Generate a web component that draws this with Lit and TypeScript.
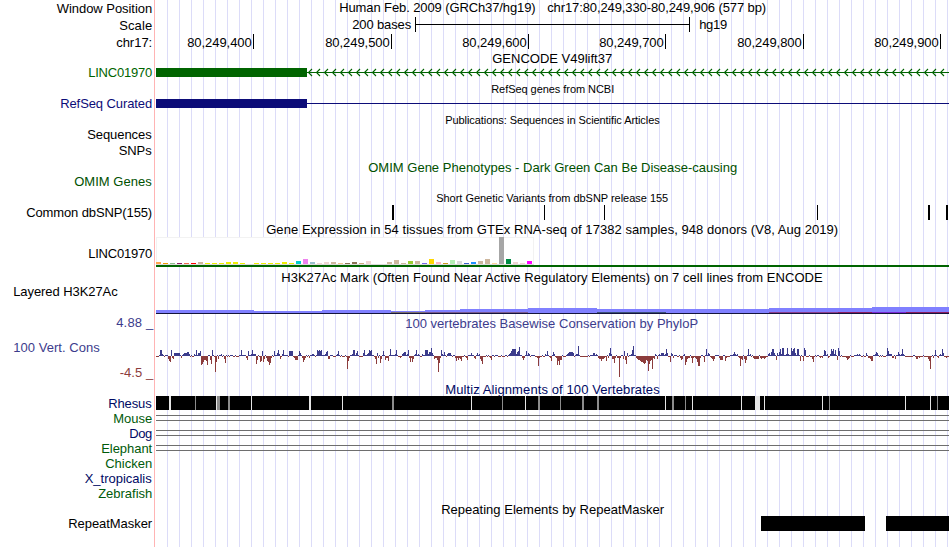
import { LitElement, html, svg, css } from "lit";
import { customElement } from "lit/decorators.js";

type Tone = "ink" | "gene" | "refseq" | "omim" | "up" | "down" | "navy" | "leaf";

/** A text run: content, left edge, baseline, advance width. */
interface Run {
  t: string;
  x: number;
  y: number;
  w: number;
  tone?: Tone;
  small?: boolean;
}

interface Track {
  height: number;
  labels: Run[];
  titles?: Run[];
  art?: () => unknown;
}

const LEFT = 156;
const RIGHT = 949;

const run = (r: Run) => svg`<text
  class="${r.tone ?? "ink"} ${r.small ? "small" : ""}"
  x=${r.x + 0.7} y=${r.y} textLength=${r.w - 1}>${r.t}</text>`;

const box = (x: number, y: number, w: number, h: number, fill = "#000") =>
  svg`<rect x=${x} y=${y} width=${w} height=${h} fill=${fill}></rect>`;

const label = (t: string, x: number, y: number, tone: Tone = "ink", end = 152.5): Run => ({
  t, x, y, w: end - x, tone,
});

// ---- position ruler ----
const ticks: [string, number][] = [
  ["80,249,400", 253], ["80,249,500", 391], ["80,249,600", 528],
  ["80,249,700", 665], ["80,249,800", 803], ["80,249,900", 940],
];

// ---- strand arrows along the intron ----
const arrows = () => {
  let d = "";
  for (let x = 308.5; x < RIGHT - 3; x += 8) d += `M${x + 3.5} 69L${x} 72.5L${x + 3.5} 76`;
  return svg`<path d=${d} fill="none" stroke="#006400" stroke-width="1.1"></path>`;
};

// ---- tissue expression: colour and bar height ----
const Y = "#eeee00";
const T = "#cdb79e";
const P = "#eed5d2";
const tissues: [string, number][] = [
  ["#ffa54f", 2], ["#ee9a00", 1], ["#8fbc8f", 1], ["#8b1c62", 1], ["#ee6a50", 1], ["#ff0000", 1],
  [T, 2], [Y, 1], [Y, 1], [Y, 1], [Y, 2], [Y, 2], [Y, 1], [Y, 0], [Y, 1], [Y, 1], [Y, 1], [Y, 1],
  [Y, 2], [Y, 1], ["#00cdcd", 3], ["#ee82ee", 5], ["#9ac0cd", 2], [P, 1], [P, 2], [T, 2],
  ["#eec591", 1], ["#8b7355", 1], ["#8b7355", 2], ["#cdaa7d", 1], [P, 3], [P, 0], [P, 0], [T, 2],
  [T, 4], [T, 1], ["#9acd32", 3], [T, 3], ["#7a67ee", 1], ["#ffd700", 5], ["#ffb6c1", 2],
  ["#cd9b1d", 1], ["#b4eeb4", 4], ["#d9d9d9", 3], ["#3a5fcd", 1], ["#1e90ff", 2], [T, 3], [T, 5],
  ["#ffd39b", 1], ["#a6a6a6", 27], ["#008b45", 5], [P, 2], [P, 1], ["#ff00ff", 3],
];

// ---- histone mark signal: from, to, top ----
const signal: [number, number, number][] = [
  [156, 254, 310], [254, 322, 311], [322, 391, 310], [391, 425, 311], [425, 460, 310],
  [460, 528, 309], [528, 597, 308], [597, 769, 309], [769, 872, 308], [872, 949, 307],
];
const underlay: [number, number, string][] = [
  [391, 425, "#80706c"], [425, 528, "#7a5a90"], [597, 666, "#3c5078"],
  [769, 838, "#8b3c8c"], [838, 872, "#8b1a60"], [872, 906, "#7a28d2"], [906, 949, "#8b1a60"],
];

// ---- conservation scores: first base column, then consecutive values ----
const peaks: [number, ...number[]][] = [
  [159, 1, 6, 6, 2, 1], [168, -3, -5, -6, 6, -2, -3], [174, 3, 3, 3, 3, 3, 3], [181, -2, 1, 2, 3, 3, 3, 4, 4, 2],
  [193, -1, 2, 1, 6, 1, 3, 3, 5, -9, -8, -6, -4], [205, -4, -5, -9, 1, 1, -4, -8, 6, 1, -1, -16, -6],
  [218, -3, 1, 1, 2, -1, 1, -3, -7], [239, 1, 1, 6, 1, 1], [246, -2, -4, 5], [251, 2, 6, 2, 2, 2, -8, -4],
  [260, -6, -5, 5, -6, -3, 1, -2, -5, -6, -9, -7, -2], [274, 5, 1, 1, 3, 6, 2, -3, -1, 2, 6, 1],
  [289, 5, 5, 5, 5, -1, -2, -4, -4, -4, 1, 5, 3, 1, -2, -6, -4, -2], [309, -2, 1, 1, 2, 2, 1, -1, 1, 6, 5, 6, 5, 6, 1, 1, 1, 2, 4, 5, -3, -3],
  [336, 1, 2, 5, 1], [347, -13, -5, -2, 1, 1, 2, 6, 6, 1, 3, 5, 1, -1], [363, 3, 6, 1, 1, 2, 3, 6, 5, 6, 1],
  [375, -3, -8, 3, -2, 1, -7, -3, 1, 5, 1, -4, -2, -2, -5, 1, 7, 1], [394, 1, 2, 6, 1, -1, -1, -2],
  [402, 2, 3, 4, 4, 1, 2, 6, -2, -6, -2, -6, -3, 1, 2, 6, 1, 2, 1], [422, 2, 1, 1, 6, 6, 6, 2, 4, 4, 8, 3, 1, -3, -2, -2, -4, -16, -7, -2, 6, 2, 1, 4],
  [447, 2, 3, 3, 3, 1], [455, -2, -5, -2, -4, -2, -3, -5, -1], [466, -2, -4, 1, 1, 1, 3, 1, 1, -2, -3, 1, 3, 1, 2, -3, -5, -8, -1],
  [490, -2, -4, 1], [508, 1, 2, 3, 5, 7, 7, 7, 7, 2, 4, 5, 9, 1, 1, -2, -4, -2, 1, 5, 1, 3, 2],
  [537, -2, -10, -2], [545, 2, 1, 5, 1, -1, -2, -5, 1, 4, 2, -1, -2, -9, -5, -9, -4, -4, 1],
  [566, 1, 2, 3, 4, 4, 4, 4, 3, -1, 1, 2, 2, 10, 1], [591, 1, 1, 3, 3, 1, 2, 1, -2, -3, -3, -5, -3, -3, -2, -1, -5, 1, -2, 3, 8, 2, -3, -3, -7, -2, 1, -2, -2, -21, -2, 1, 1, -3, 5, -4, -8, 3],
  [630, 1, 2, 6, 10, 1], [636, -2, -3, -4, -4, -5, -6, -6, -7, -8, -7, -4, -5, -15, -8, -5, -4, -13, -2, -3, 2, 1, -3, 1, 2, 1, 3, 3, 3, 1, 2, 7, 3, -1, -1, -6, 3, 2, -2],
  [680, -2, -4, -3, 1, 2, -9, -6, -3, -2, -2, 1, -2, -7, -2, -1, -2, -3, -6, -10, -10, -2, 1, 1, -1, -6, 1, 7, 1, 3, 2],
  [711, -2, -3, -5, -3, 1], [719, -2, -4, -4, -4, 1, 1, -5, -2], [732, 1, 2, 4, 2, 1, 2], [739, -2, -10, -3, -4, 1, -3, -7, -4, 1, 7, 1, 2],
  [753, -2, -3, -3, -3, -3, -3, 1, -2, -3, -2, -2, -3, -2], [768, 2, 3, 1, 4, 7, 7, 3, 1, -4, 3, 1, 4, 7, 2, 8, 8, 1, 1, 2, 8, 2, 1, 1, 8, 5, 7, 8, 3, 1, 7, 7, 1, -5, 1, -1, -5, 8, 6],
  [811, -1, -3, -6, -1], [820, -2, -1, -2, 1, 6, 5, 1, 2, -2, -1, 2, 7, 5, 7, 2, 6, 1, -4, 8, 5], [846, -2, -4, -3, -2],
  [857, 2, 1, 2, 1], [866, 3, 1, -2, -2, -3, -5, -5, 1, 1, 2, 4, 3], [886, 1, 8, 5, 2, 2, 2, -2, -2, 1, -3, 1, 1, 4, 2, 1, 2, 7, 2, 1],
  [915, -1, -3, -3, -1, -2], [928, -3, -5, -13, -1], [933, -2, 1, 6, 1, -1, -2, 1, 2, 1, 7, 3, -1, -1, -2],
];

const scores = (): number[] => {
  const out: number[] = [];
  for (let x = LEFT; x < RIGHT; x++) {
    out.push(Math.sin(x * 0.31) + Math.sin(x * 1.37) + Math.sin(x * 2.9) > 0.25 ? 1 : -1);
  }
  for (const [start, ...vals] of peaks) vals.forEach((v, i) => (out[start + i - LEFT] = v));
  return out.slice(0, RIGHT - LEFT);
};

// ---- alignment gaps: position, width, shade ----
const L = "#e6e6e6";
const G = "#8c8c8c";
const gaps: [number, number, string][] = [
  [169, 2, L], [195, 1, G], [216, 1, L], [217, 3, G], [228, 2, G], [251, 1, L], [309, 2, L], [342, 1, L],
  [392, 2, G], [471, 1, L], [502, 1, G], [525, 1, L], [538, 2, G], [560, 1, G], [582, 2, G], [597, 2, G],
  [665, 1, L], [672, 2, G], [685, 1, G], [692, 1, L], [741, 1, L], [755, 5, L], [764, 1, L], [822, 1, L],
  [829, 1, G], [905, 1, L], [930, 1, L], [937, 1, G],
];

const rails = (y: number) => () =>
  [y, y + 5].map((v) => box(LEFT, v, RIGHT - LEFT, 1, "#6e6e6e"));

const tracks: Track[] = [
  {
    height: 16,
    labels: [label("Window Position", 56, 13)],
    titles: [
      { t: "Human Feb. 2009 (GRCh37/hg19)", x: 338.5, y: 12, w: 197.5 },
      { t: "chr17:80,249,330-80,249,906 (577 bp)", x: 546.5, y: 12, w: 220 },
    ],
  },
  {
    height: 17,
    labels: [label("Scale", 118.5, 30)],
    titles: [
      { t: "200 bases", x: 351.5, y: 29, w: 60 },
      { t: "hg19", x: 698.5, y: 29, w: 29 },
    ],
    art: () => [box(415, 17, 1, 15), box(689, 17, 1, 15), box(415, 24, 275, 1)],
  },
  {
    height: 17,
    labels: [label("chr17:", 115.5, 47)],
    titles: ticks.map(([t, x]) => ({ t, x: x - 66.5, y: 47, w: 65.5 })),
    art: () => ticks.map(([, x]) => box(x, 34, 1, 15)),
  },
  {
    height: 32,
    labels: [label("LINC01970", 87.5, 77, "gene")],
    titles: [{ t: "GENCODE V49lift37", x: 491.5, y: 63, w: 121 }],
    art: () => [box(156, 68, 151, 9, "#006400"), box(307, 72, 642, 1, "#006400"), arrows()],
  },
  {
    height: 30,
    labels: [label("RefSeq Curated", 59.5, 108, "refseq")],
    titles: [{ t: "RefSeq genes from NCBI", x: 490.5, y: 93, w: 124, small: true }],
    art: () => [box(156, 99, 151, 9, "#0c0c78"), box(307, 103, 642, 1, "#0c0c78")],
  },
  {
    height: 16,
    labels: [],
    titles: [{ t: "Publications: Sequences in Scientific Articles", x: 444.5, y: 124, w: 215.5, small: true }],
  },
  { height: 14, labels: [label("Sequences", 86.5, 139, "ink", 152)] },
  { height: 16, labels: [label("SNPs", 118, 155, "ink", 152)] },
  {
    height: 32,
    labels: [label("OMIM Genes", 73.5, 186, "omim", 152)],
    titles: [{ t: "OMIM Gene Phenotypes - Dark Green Can Be Disease-causing", x: 367.5, y: 172, w: 370, tone: "omim" }],
  },
  {
    height: 32,
    labels: [label("Common dbSNP(155)", 25.5, 217)],
    titles: [{ t: "Short Genetic Variants from dbSNP release 155", x: 435.5, y: 202, w: 233, small: true }],
    art: () =>
      [[392, 2], [544, 1], [604, 1], [817, 1], [928, 2], [946, 2]].map(([x, w]) => box(x, 205, w, 15)),
  },
  {
    height: 46,
    labels: [label("LINC01970", 87.5, 258)],
    titles: [{
      t: "Gene Expression in 54 tissues from GTEx RNA-seq of 17382 samples, 948 donors (V8, Aug 2019)",
      x: 265.5, y: 234, w: 573,
    }],
    art: () => [
      box(156, 237, 378, 28, "#f2f2f2"),
      box(157, 238, 376, 26, "#fff"),
      box(156, 264, 378, 1, "#dcdcdc"),
      tissues.map(([c, h], i) => box(LEFT + i * 7, 264 - h, 5, h, c)),
      box(156, 265, 793, 2, "#006400"),
    ],
  },
  {
    height: 48,
    labels: [label("Layered H3K27Ac", 12.5, 296, "ink", 118)],
    titles: [{
      t: "H3K27Ac Mark (Often Found Near Active Regulatory Elements) on 7 cell lines from ENCODE",
      x: 280.5, y: 282, w: 542.5,
    }],
    art: () => [
      signal.map(([a, b, y]) => box(a, y, b - a, 313 - y, "#8080ff")),
      underlay.map(([a, b, c]) => box(a, 312, b - a, 1, c)),
      box(156, 313, 793, 1, "#14143c"),
    ],
  },
  {
    height: 66,
    labels: [
      label("4.88 _", 115.5, 327, "up", 153.5),
      label("100 Vert. Cons", 12.5, 352, "up", 100),
      label("-4.5 _", 119, 377, "down", 153.5),
    ],
    titles: [{ t: "100 vertebrates Basewise Conservation by PhyloP", x: 404.5, y: 328, w: 294, tone: "up" }],
    art: () =>
      scores().map((v, i) =>
        v > 0 ? box(LEFT + i, 356 - v, 1, v, "#3c3c8c") : box(LEFT + i, 356, 1, -v, "#8c3c3c")),
  },
  {
    height: 29,
    labels: [label("Rhesus", 107.5, 408, "navy", 152)],
    titles: [{ t: "Multiz Alignments of 100 Vertebrates", x: 444.5, y: 394, w: 215.5, tone: "navy" }],
    art: () => [box(156, 396, 793, 14), gaps.map(([x, w, c]) => box(x, 396, w, 14, c))],
  },
  { height: 15, labels: [label("Mouse", 112.5, 423, "leaf")], art: rails(415) },
  { height: 15, labels: [label("Dog", 128.5, 438, "navy")], art: rails(430) },
  { height: 15, labels: [label("Elephant", 100.5, 453, "leaf")], art: rails(445) },
  { height: 15, labels: [label("Chicken", 104.5, 468, "leaf")] },
  { height: 15, labels: [label("X_tropicalis", 84, 483, "navy", 152)] },
  { height: 15, labels: [label("Zebrafish", 97.5, 498, "leaf")] },
  {
    height: 46,
    labels: [label("RepeatMasker", 67.5, 528)],
    titles: [{ t: "Repeating Elements by RepeatMasker", x: 440.5, y: 514, w: 224 }],
    art: () => [box(761, 516, 104, 15), box(886, 516, 63, 15)],
  },
];

@customElement("app-root")
export class AppRoot extends LitElement {
  static styles = css`
    :host {
      display: block;
      width: 950px;
      height: 547px;
      overflow: hidden;
      background: #fff;
    }
    .browser {
      display: flex;
      flex-direction: column;
    }
    .track {
      display: grid;
      grid-template-columns: 154px 796px;
    }
    .view {
      border-left: 1px solid #ffb4b4;
      padding-left: 1px;
      display: flex;
    }
    svg {
      display: block;
      overflow: visible;
    }
    .canvas {
      background: repeating-linear-gradient(
        to right,
        transparent 0 11px,
        #dcdcf8 11px 12px
      );
    }
    rect {
      shape-rendering: crispEdges;
    }
    text {
      font-family: "Liberation Sans", Arial, Helvetica, sans-serif;
      font-size: 13px;
      white-space: pre;
    }
    .small { font-size: 11px; }
    .ink { fill: #000; }
    .gene { fill: #006400; }
    .refseq { fill: #0c0c78; }
    .omim { fill: #005000; }
    .up { fill: #3c3c8c; }
    .down { fill: #8c3c3c; }
    .navy { fill: #000a64; }
    .leaf { fill: #005a0a; }
  `;

  render() {
    let top = 0;
    return html`<div class="browser">
      ${tracks.map((t) => {
        const y = top;
        top += t.height;
        return html`<div class="track">
          <svg width="154" height=${t.height} viewBox="0 ${y} 154 ${t.height}">
            ${t.labels.map(run)}
          </svg>
          <div class="view">
            <svg class="canvas" width="793" height=${t.height} viewBox="156 ${y} 793 ${t.height}">
              ${(t.titles ?? []).map(run)}
              ${t.art ? t.art() : null}
            </svg>
          </div>
        </div>`;
      })}
    </div>`;
  }
}
